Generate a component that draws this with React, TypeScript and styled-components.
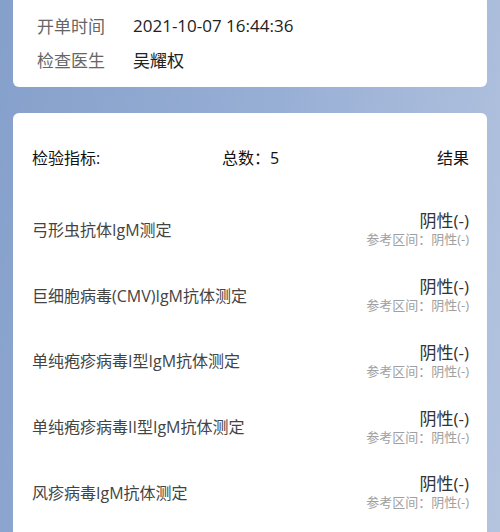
import styled, { createGlobalStyle } from "styled-components";

const GlobalStyle = createGlobalStyle`
    html, body {
        margin: 0;
        padding: 0;
    }
    body {
        font-family: "Open Sans", "Noto Sans CJK SC", sans-serif;
        background: #9bb2d6;
    }
    * {
        box-sizing: border-box;
    }
`;

const items = [
    "弓形虫抗体IgM测定",
    "巨细胞病毒(CMV)IgM抗体测定",
    "单纯疱疹病毒I型IgM抗体测定",
    "单纯疱疹病毒II型IgM抗体测定",
    "风疹病毒IgM抗体测定",
];

const App = () => {
    return (
        <Page>
            <GlobalStyle />
            <InfoCard>
                <InfoRow>
                    <InfoLabel>开单时间</InfoLabel>
                    <InfoValue>2021-10-07 16:44:36</InfoValue>
                </InfoRow>
                <InfoRow>
                    <InfoLabel>检查医生</InfoLabel>
                    <InfoValue>吴耀权</InfoValue>
                </InfoRow>
            </InfoCard>
            <ResultCard>
                <Header>
                    <HeaderText>检验指标:</HeaderText>
                    <HeaderText>总数：5</HeaderText>
                    <HeaderText $right>结果</HeaderText>
                </Header>
                <List>
                    {items.map((name) => (
                        <ItemRow key={name}>
                            <ItemName>{name}</ItemName>
                            <ResultBox>
                                <ResultValue>阴性(-)</ResultValue>
                                <RefRange>参考区间：阴性(-)</RefRange>
                            </ResultBox>
                        </ItemRow>
                    ))}
                </List>
            </ResultCard>
        </Page>
    );
};

const Page = styled.div`
    width: 500px;
    height: 532px;
    overflow: hidden;
    padding: 0 13px;
    display: flex;
    flex-direction: column;
    gap: 26px;
    background: linear-gradient(100deg, #85a0cb 0%, #98afd5 50%, #b4c4df 100%);
`;

const InfoCard = styled.div`
    background: #fff;
    border-radius: 0 0 6px 6px;
    padding: 8px 24px 11px;
`;

const InfoRow = styled.div`
    display: flex;
    align-items: center;
    height: 34px;
    font-size: 17px;
`;

const InfoLabel = styled.div`
    width: 96px;
    color: #666;
`;

const InfoValue = styled.div`
    color: #222;
`;

const ResultCard = styled.div`
    flex: 1;
    background: #fff;
    border-radius: 6px 6px 0 0;
    padding: 22px 18px 0 19px;
`;

const Header = styled.div`
    display: grid;
    grid-template-columns: 190px auto 1fr;
    align-items: center;
    height: 44px;
    margin-bottom: 17px;
`;

const HeaderText = styled.div<{ $right?: boolean }>`
    font-size: 16px;
    font-weight: 400;
    color: #111;
    text-align: ${({ $right }) => ($right ? "right" : "left")};
`;

const List = styled.div`
    display: flex;
    flex-direction: column;
`;

const ItemRow = styled.div`
    display: flex;
    justify-content: space-between;
    align-items: center;
    height: 65.75px;
`;

const ItemName = styled.div`
    font-size: 16px;
    color: #444;
`;

const ResultBox = styled.div`
    display: flex;
    flex-direction: column;
    align-items: flex-end;
    padding-top: 2px;
`;

const ResultValue = styled.div`
    font-size: 17px;
    line-height: 20px;
    color: #333;
`;

const RefRange = styled.div`
    font-size: 13px;
    line-height: 17px;
    color: #a0a0a0;
`;

export default App;
